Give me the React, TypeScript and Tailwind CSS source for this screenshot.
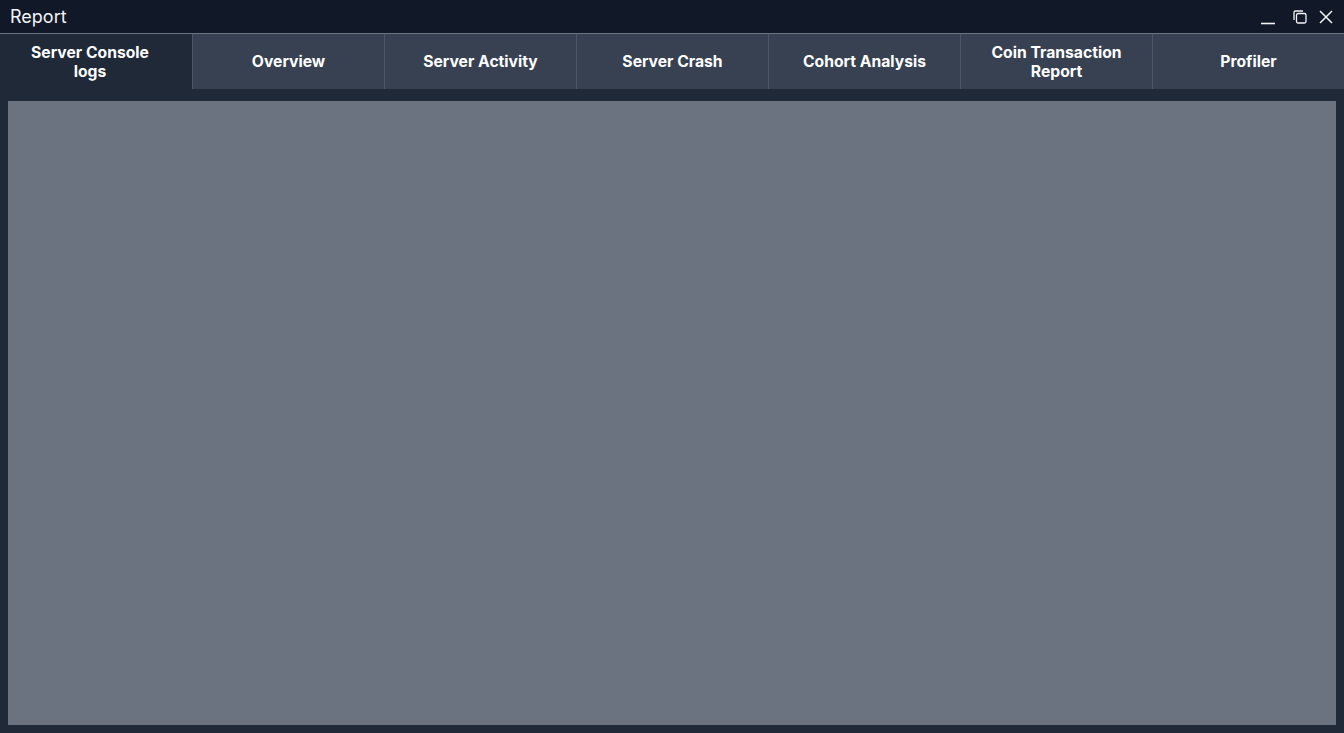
import { useState } from "react";

const tabs = [
  "Server Console logs",
  "Overview",
  "Server Activity",
  "Server Crash",
  "Cohort Analysis",
  "Coin Transaction Report",
  "Profiler",
];

export default function App() {
  const [active, setActive] = useState(0);

  return (
    <div className="flex h-[733px] w-[1344px] flex-col overflow-hidden bg-[#1f2937] font-['Inter',sans-serif] text-white">
      <div className="flex h-[34px] shrink-0 items-center justify-between border-b border-[#6b7280] bg-[#111827] pl-[10px] pr-[10px]">
        <span className="text-[18px] leading-none text-gray-100">Report</span>
        <div className="flex items-center gap-[10px] text-gray-100">
          <svg className="mr-[6px]" width="16" height="16" viewBox="0 0 16 16" fill="none" stroke="currentColor" strokeWidth="1.6">
            <path d="M1 14.5h14" />
          </svg>
          <svg width="16" height="16" viewBox="0 0 16 16" fill="none" stroke="currentColor" strokeWidth="1.3">
            <rect x="4.5" y="4.5" width="9.5" height="9.5" rx="1.5" />
            <path d="M2 11V3.5A1.5 1.5 0 0 1 3.5 2H11" />
          </svg>
          <svg width="16" height="16" viewBox="0 0 16 16" fill="none" stroke="currentColor" strokeWidth="1.5">
            <path d="M2 2l12 12M14 2L2 14" />
          </svg>
        </div>
      </div>

      <div className="grid h-[55px] shrink-0 grid-cols-7">
        {tabs.map((tab, i) => (
          <button
            key={tab}
            type="button"
            onClick={() => setActive(i)}
            className={`flex items-center justify-center text-center text-[15.7px] font-bold leading-[19px] ${
              i > 0 ? "border-l border-[#4b5563] px-6" : "pl-[18px] pr-[30px]"
            } ${active === i ? "bg-[#1f2937]" : "bg-[#374151]"}`}
          >
            {tab}
          </button>
        ))}
      </div>

      <div className="flex-1 px-2 pb-2 pt-3">
        <div className="h-full w-full bg-[#6b7280]" />
      </div>
    </div>
  );
}
